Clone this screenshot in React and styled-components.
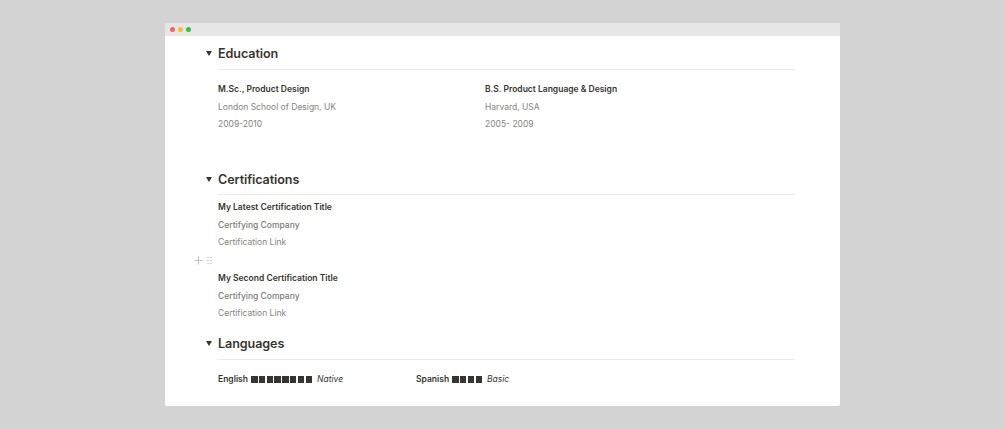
import React from 'react'
import { styled, createGlobalStyle } from 'styled-components'

const Global = createGlobalStyle`
  body{
    margin:0;
    background:#d3d3d3;
    font-family:Inter, "Noto Sans", sans-serif;
  }
`

const Page = styled.div`
  height:429px;
  padding:23px 165px 0 165px;
  box-sizing:border-box;
`

const Window = styled.div`
  width:675px;
  height:383px;
  background:#fff;
  border-radius:2px;
  overflow:hidden;
`

const TitleBar = styled.div`
  height:13px;
  background:#e6e6e6;
  display:flex;
  align-items:center;
  gap:3px;
  padding-left:5px;
`

const Dot = styled.span`
  width:5px;
  height:5px;
  border-radius:50%;
  background:${p => p.$c};
`

const Body = styled.div`
  padding:7px 45px 0 53px;
  color:#37352f;
`

const Section = styled.section`
  margin-bottom:${p => p.$mb || 0}px;
`

const Heading = styled.h2`
  position:relative;
  margin:0;
  font-size:12.6px;
  font-weight:600;
  line-height:22px;
  height:22px;
  letter-spacing:-0.1px;
  &::before{
    content:'';
    position:absolute;
    left:-12px;
    top:8px;
    border-left:3px solid transparent;
    border-right:3px solid transparent;
    border-top:5px solid #37352f;
  }
`

const Rule = styled.div`
  height:1px;
  background:#ececea;
  margin:${p => p.$mt}px 0 ${p => p.$mb}px;
`

const Columns = styled.div`
  display:grid;
  grid-template-columns:267px 1fr;
`

const Line = styled.div`
  font-size:8.5px;
  line-height:17.7px;
  height:17.7px;
  white-space:nowrap;
  font-weight:${p => (p.$bold ? 600 : p.$mid ? 500 : 400)};
  color:${p => (p.$bold ? '#37352f' : p.$mid ? '#7d7c78' : '#858480')};
`

const HandleRow = styled.div`
  position:relative;
  height:17.7px;
`

const Handle = styled.div`
  position:absolute;
  left:-24px;
  top:4px;
  display:flex;
  align-items:center;
  gap:4px;
  color:#c4c4c2;
`

const LangRow = styled.div`
  display:flex;
  font-size:8.5px;
  line-height:17.7px;
`

const Lang = styled.div`
  display:flex;
  align-items:center;
  width:${p => p.$w}px;
  font-weight:600;
  white-space:nowrap;
`

const Squares = styled.span`
  display:inline-flex;
  gap:1.3px;
  margin:0 5px 0 3px;
`

const Square = styled.span`
  width:6.5px;
  height:6.5px;
  background:#37352f;
`

const Level = styled.em`
  font-weight:400;
  color:#37352f;
`

function Meter({ n }) {
  return (
    <Squares>
      {Array.from({ length: n }).map((_, i) => <Square key={i} />)}
    </Squares>
  )
}

export default function App() {
  return (
    <Page>
      <Global />
      <Window>
        <TitleBar>
          <Dot $c="#fe5f57" />
          <Dot $c="#febc2e" />
          <Dot $c="#28c840" />
        </TitleBar>
        <Body>
          <Section $mb={35}>
            <Heading>Education</Heading>
            <Rule $mt={4} $mb={11} />
            <Columns>
              <div>
                <Line $bold>M.Sc., Product Design</Line>
                <Line>London School of Design, UK</Line>
                <Line>2009-2010</Line>
              </div>
              <div>
                <Line $bold>B.S. Product Language &amp; Design</Line>
                <Line>Harvard, USA</Line>
                <Line>2005- 2009</Line>
              </div>
            </Columns>
          </Section>

          <Section $mb={10}>
            <Heading>Certifications</Heading>
            <Rule $mt={3} $mb={4} />
            <Line $bold>My Latest Certification Title</Line>
            <Line $mid>Certifying Company</Line>
            <Line>Certification Link</Line>
            <HandleRow>
              <Handle>
                <svg width="9" height="9" viewBox="0 0 9 9">
                  <path d="M4.5 0.5v8M0.5 4.5h8" stroke="currentColor" strokeWidth="1" />
                </svg>
                <svg width="5" height="9" viewBox="0 0 5 9">
                  {[0, 1].map(c => [0, 1, 2].map(r => (
                    <circle key={c + '-' + r} cx={1 + c * 3} cy={1.5 + r * 3} r="0.8" fill="currentColor" />
                  )))}
                </svg>
              </Handle>
            </HandleRow>
            <Line $bold>My Second Certification Title</Line>
            <Line $mid>Certifying Company</Line>
            <Line>Certification Link</Line>
          </Section>

          <Section>
            <Heading>Languages</Heading>
            <Rule $mt={4} $mb={11} />
            <LangRow>
              <Lang $w={198}>English<Meter n={8} /><Level>Native</Level></Lang>
              <Lang $w={200}>Spanish<Meter n={4} /><Level>Basic</Level></Lang>
            </LangRow>
          </Section>
        </Body>
      </Window>
    </Page>
  )
}
